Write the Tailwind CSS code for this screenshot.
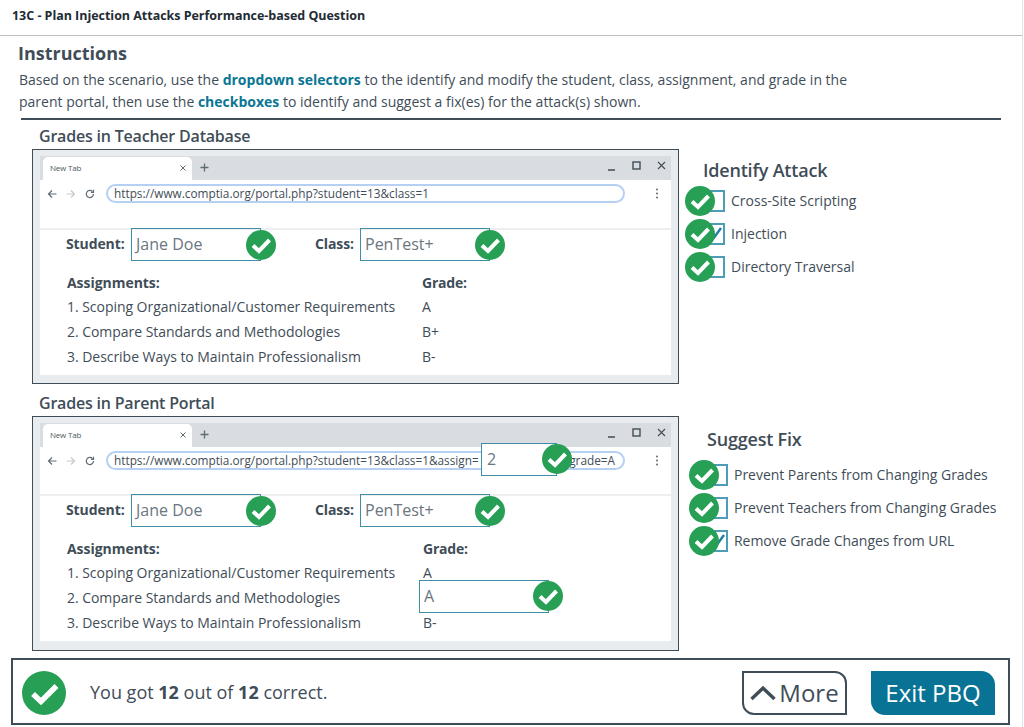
<!DOCTYPE html>
<html lang="en">
<head>
    <meta charset="UTF-8">
    <meta name="viewport" content="width=device-width, initial-scale=1.0">
    <title>13C - Plan Injection Attacks Performance-based Question</title>
    <script src="https://cdn.jsdelivr.net/npm/@tailwindcss/browser@4"></script>
</head>
<body class="bg-white font-['Open_Sans',sans-serif] text-[#3f4d58] h-[727px] overflow-hidden">
    <div class="h-[727px] w-[1023px] border-r border-[#e4e4e4]">
        <header class="h-[36px] border-b border-[#bdbdbd] pl-[12px] flex items-center text-[12.5px] font-bold tracking-[-0.03px] text-[#222b33] pb-[3px]">13C - Plan Injection Attacks Performance-based Question</header>

        <main class="pl-[18px]">
            <h2 class="mt-[5px] h-[24px] leading-[24px] text-[18px] font-bold">Instructions</h2>
            <p class="mt-[4px] ml-[1px] w-[860px] text-[14px] leading-[22px]">Based on the scenario, use the <b class="text-[#0a7694]">dropdown selectors</b> to the identify and modify the student, class, assignment, and grade in the parent portal, then use the <b class="text-[#0a7694]">checkboxes</b> to identify and suggest a fix(es) for the attack(s) shown.</p>
            <div class="mt-[5px] ml-[3px] w-[980px] h-[2px] bg-[#3f4d58]"></div>

            <!-- Teacher database -->
            <h3 class="mt-[6px] ml-[21px] h-[20px] leading-[20px] text-[16px] font-semibold tracking-[-0.2px]">Grades in Teacher Database</h3>
            <div class="mt-[3px] ml-[14px] flex">
                <div class="w-[647px] h-[235px] border border-[#3f4d58] bg-[#e8ecef] px-[7px] pt-[6px]">
                    <div class="h-[219px] bg-white">
                        <div class="h-[24px] bg-[#d9dce0] flex items-end relative">
                            <div class="ml-[3px] w-[149px] h-[23px] bg-white rounded-t-[5px] flex items-center justify-between pl-[7px] pr-[5px] pb-[2px]">
                                <span class="text-[8px] tracking-[-0.2px] text-[#4d5963]">New Tab</span>
                                <svg class="w-[8px] h-[8px]" viewBox="0 0 8 8" fill="none" stroke="#5f6b75" stroke-width="1"><path d="M1.500 1.500l5 5M6.500 1.500l-5 5"/></svg>
                            </div>
                            <svg class="ml-[8px] mb-[8px] w-[9px] h-[9px]" viewBox="0 0 9 9" fill="none" stroke="#5f6b75" stroke-width="1.3"><path d="M4.500 0.500v8M0.500 4.500h8"/></svg>
                            <div class="ml-auto mr-[4px] mb-[9px] flex items-center gap-[14px]">
                                <svg class="w-[11px] h-[11px]" viewBox="0 0 11 11" fill="none" stroke="#3f4d58" stroke-width="1.500"><path d="M2 10h7"/></svg>
                                <svg class="w-[11px] h-[11px]" viewBox="0 0 11 11" fill="none" stroke="#3f4d58" stroke-width="1.400"><rect x="2" y="2" width="7" height="7"/></svg>
                                <svg class="w-[11px] h-[11px]" viewBox="0 0 11 11" fill="none" stroke="#3f4d58" stroke-width="1.100"><path d="M2 2l7 7M9 2l-7 7"/></svg>
                            </div>
                        </div>
                        <div class="h-[50px] flex items-start pt-[4px] border-b-2 border-[#eeeeee]">
                            <div class="w-[66px] h-[19px] flex items-center pl-[7px] gap-[9px]">
                                <svg class="w-[10px] h-[10px] shrink-0" viewBox="0 0 10 10" fill="none" stroke="#5f6b75" stroke-width="1.200"><path d="M9.500 5h-8M5 1.500L1.500 5 5 8.500"/></svg>
                                <svg class="w-[10px] h-[10px] shrink-0" viewBox="0 0 10 10" fill="none" stroke="#c6cacd" stroke-width="1.200"><path d="M.5 5h8M5 1.500L8.500 5 5 8.500"/></svg>
                                <svg class="w-[10px] h-[10px] shrink-0" viewBox="0 0 10 10" fill="none" stroke="#5f6b75" stroke-width="1.200"><path d="M8.500 5A3.600 3.600 0 1 1 7.400 2.400M8.500 .8v2.500H6"/></svg>
                            </div>
                            <div class="w-[519px] h-[19px] border-2 border-[#b5d0f2] rounded-full pl-[6px] text-[11.8px] leading-[15px] whitespace-nowrap">https://www.comptia.org/portal.php?student=13&amp;class=1</div>
                            <svg class="ml-[27px] mt-[4px] w-[10px] h-[11px]" viewBox="0 0 10 11" fill="#5f6b75"><circle cx="5" cy="1.500" r="1"/><circle cx="5" cy="5.500" r="1"/><circle cx="5" cy="9.500" r="1"/></svg>
                        </div>
                        <div class="flex items-center pl-[26px] -mt-[2px]">
                            <span class="w-[65px] text-[14px] font-bold tracking-[-0.1px] pb-[2px]">Student:</span>
                            <div class="w-[130px] h-[33px] border border-[#3d8ea6] pl-[4px] text-[16px] leading-[31px] text-[#6b7680]">Jane Doe</div>
                            <svg class="relative -ml-[15px] w-[30px] h-[30px]" viewBox="0 0 30 30"><circle cx="15" cy="15" r="15" fill="#27a056"/><path d="M7 15.500L13 21 23.500 10" fill="none" stroke="#fff" stroke-width="4"/></svg>
                            <span class="ml-[39px] w-[45px] text-[14px] font-bold tracking-[-0.1px] pb-[2px]">Class:</span>
                            <div class="w-[130px] h-[33px] border border-[#3d8ea6] pl-[4px] text-[16px] leading-[31px] text-[#6b7680]">PenTest+</div>
                            <svg class="relative -ml-[15px] w-[30px] h-[30px]" viewBox="0 0 30 30"><circle cx="15" cy="15" r="15" fill="#27a056"/><path d="M7 15.500L13 21 23.500 10" fill="none" stroke="#fff" stroke-width="4"/></svg>
                        </div>
                        <div class="mt-[9px] ml-[27px] grid grid-cols-[355px_1fr] text-[14px] leading-[25px] tracking-[-0.04px]">
                            <span class="font-bold h-[24px]">Assignments:</span><span class="font-bold h-[24px] tracking-[-0.2px]">Grade:</span>
                            <span>1. Scoping Organizational/Customer Requirements</span><span>A</span>
                            <span>2. Compare Standards and Methodologies</span><span>B+</span>
                            <span>3. Describe Ways to Maintain Professionalism</span><span>B-</span>
                        </div>
                    </div>
                </div>
                <div class="ml-[6px]">
                    <h3 class="mt-[9px] pl-[18px] h-[24px] leading-[24px] text-[18px] font-semibold tracking-[-0.2px]">Identify Attack</h3>
                    <div class="mt-[2px] text-[14px]">
                        <div class="h-[33px] flex items-center">
                            <svg class="relative z-10 w-[30px] h-[30px]" viewBox="0 0 30 30"><circle cx="15" cy="15" r="15" fill="#27a056"/><path d="M7 15.500L13 21 23.500 10" fill="none" stroke="#fff" stroke-width="4"/></svg>
                            <div class="-ml-[12px] w-[22px] h-[22px] border-2 border-[#4f9cb8]"></div>
                            <span class="ml-[6px]">Cross-Site Scripting</span>
                        </div>
                        <div class="h-[33px] flex items-center">
                            <svg class="relative z-10 w-[30px] h-[30px]" viewBox="0 0 30 30"><circle cx="15" cy="15" r="15" fill="#27a056"/><path d="M7 15.500L13 21 23.500 10" fill="none" stroke="#fff" stroke-width="4"/></svg>
                            <div class="-ml-[12px] w-[22px] h-[22px] border-2 border-[#4f9cb8]"><svg class="w-[18px] h-[18px]" viewBox="0 0 18 18" fill="none" stroke="#1f7fa3" stroke-width="2.400"><path d="M8 14L16 3"/></svg></div>
                            <span class="ml-[6px]">Injection</span>
                        </div>
                        <div class="h-[33px] flex items-center">
                            <svg class="relative z-10 w-[30px] h-[30px]" viewBox="0 0 30 30"><circle cx="15" cy="15" r="15" fill="#27a056"/><path d="M7 15.500L13 21 23.500 10" fill="none" stroke="#fff" stroke-width="4"/></svg>
                            <div class="-ml-[12px] w-[22px] h-[22px] border-2 border-[#4f9cb8]"></div>
                            <span class="ml-[6px]">Directory Traversal</span>
                        </div>
                    </div>
                </div>
            </div>

            <!-- Parent portal -->
            <h3 class="mt-[9px] ml-[21px] h-[20px] leading-[20px] text-[16px] font-semibold tracking-[-0.2px]">Grades in Parent Portal</h3>
            <div class="mt-[3px] ml-[14px] flex">
                <div class="w-[647px] h-[235px] border border-[#3f4d58] bg-[#e8ecef] px-[7px] pt-[6px]">
                    <div class="h-[218px] bg-white">
                        <div class="h-[24px] bg-[#d9dce0] flex items-end relative">
                            <div class="ml-[3px] w-[149px] h-[23px] bg-white rounded-t-[5px] flex items-center justify-between pl-[7px] pr-[5px] pb-[2px]">
                                <span class="text-[8px] tracking-[-0.2px] text-[#4d5963]">New Tab</span>
                                <svg class="w-[8px] h-[8px]" viewBox="0 0 8 8" fill="none" stroke="#5f6b75" stroke-width="1"><path d="M1.500 1.500l5 5M6.500 1.500l-5 5"/></svg>
                            </div>
                            <svg class="ml-[8px] mb-[8px] w-[9px] h-[9px]" viewBox="0 0 9 9" fill="none" stroke="#5f6b75" stroke-width="1.3"><path d="M4.500 0.500v8M0.500 4.500h8"/></svg>
                            <div class="ml-auto mr-[4px] mb-[9px] flex items-center gap-[14px]">
                                <svg class="w-[11px] h-[11px]" viewBox="0 0 11 11" fill="none" stroke="#3f4d58" stroke-width="1.500"><path d="M2 10h7"/></svg>
                                <svg class="w-[11px] h-[11px]" viewBox="0 0 11 11" fill="none" stroke="#3f4d58" stroke-width="1.400"><rect x="2" y="2" width="7" height="7"/></svg>
                                <svg class="w-[11px] h-[11px]" viewBox="0 0 11 11" fill="none" stroke="#3f4d58" stroke-width="1.100"><path d="M2 2l7 7M9 2l-7 7"/></svg>
                            </div>
                        </div>
                        <div class="h-[49px] flex items-start pt-[4px] border-b-2 border-[#eeeeee]">
                            <div class="w-[66px] h-[19px] flex items-center pl-[7px] gap-[9px]">
                                <svg class="w-[10px] h-[10px] shrink-0" viewBox="0 0 10 10" fill="none" stroke="#5f6b75" stroke-width="1.200"><path d="M9.500 5h-8M5 1.500L1.500 5 5 8.500"/></svg>
                                <svg class="w-[10px] h-[10px] shrink-0" viewBox="0 0 10 10" fill="none" stroke="#c6cacd" stroke-width="1.200"><path d="M.5 5h8M5 1.500L8.500 5 5 8.500"/></svg>
                                <svg class="w-[10px] h-[10px] shrink-0" viewBox="0 0 10 10" fill="none" stroke="#5f6b75" stroke-width="1.200"><path d="M8.500 5A3.600 3.600 0 1 1 7.400 2.400M8.500 .8v2.500H6"/></svg>
                            </div>
                            <div class="relative w-[519px] h-[19px] border-2 border-[#b5d0f2] rounded-full pl-[6px] text-[11.8px] leading-[15px] whitespace-nowrap">
                                https://www.comptia.org/portal.php?student=13&amp;class=1&amp;assign=
                                <span class="absolute right-[8px] top-0">grade=A</span>
                                <div class="absolute left-[373px] -top-[10px] w-[76px] h-[33px] border border-[#3d8ea6] bg-white pl-[5px] text-[16px] leading-[31px] text-[#6b7680]">2</div>
                                <svg class="absolute left-[434px] -top-[9px] w-[30px] h-[30px]" viewBox="0 0 30 30"><circle cx="15" cy="15" r="15" fill="#27a056"/><path d="M7 15.500L13 21 23.500 10" fill="none" stroke="#fff" stroke-width="4"/></svg>
                            </div>
                            <svg class="ml-[27px] mt-[4px] w-[10px] h-[11px]" viewBox="0 0 10 11" fill="#5f6b75"><circle cx="5" cy="1.500" r="1"/><circle cx="5" cy="5.500" r="1"/><circle cx="5" cy="9.500" r="1"/></svg>
                        </div>
                        <div class="flex items-center pl-[26px] -mt-[2px]">
                            <span class="w-[65px] text-[14px] font-bold tracking-[-0.1px] pb-[2px]">Student:</span>
                            <div class="w-[130px] h-[33px] border border-[#3d8ea6] pl-[4px] text-[16px] leading-[31px] text-[#6b7680]">Jane Doe</div>
                            <svg class="relative -ml-[15px] w-[30px] h-[30px]" viewBox="0 0 30 30"><circle cx="15" cy="15" r="15" fill="#27a056"/><path d="M7 15.500L13 21 23.500 10" fill="none" stroke="#fff" stroke-width="4"/></svg>
                            <span class="ml-[39px] w-[45px] text-[14px] font-bold tracking-[-0.1px] pb-[2px]">Class:</span>
                            <div class="w-[130px] h-[33px] border border-[#3d8ea6] pl-[4px] text-[16px] leading-[31px] text-[#6b7680]">PenTest+</div>
                            <svg class="relative -ml-[15px] w-[30px] h-[30px]" viewBox="0 0 30 30"><circle cx="15" cy="15" r="15" fill="#27a056"/><path d="M7 15.500L13 21 23.500 10" fill="none" stroke="#fff" stroke-width="4"/></svg>
                        </div>
                        <div class="mt-[9px] ml-[27px] grid grid-cols-[356px_1fr] text-[14px] leading-[25px] tracking-[-0.04px]">
                            <span class="font-bold h-[24px]">Assignments:</span><span class="font-bold h-[24px] tracking-[-0.2px]">Grade:</span>
                            <span>1. Scoping Organizational/Customer Requirements</span><span>A</span>
                            <span>2. Compare Standards and Methodologies</span>
                            <span class="relative">
                                <span class="absolute -left-[4px] -top-[5px] w-[130px] h-[33px] border border-[#3d8ea6] bg-white pl-[4px] text-[16px] leading-[31px] text-[#6b7680]">A</span>
                                <svg class="absolute left-[110px] -top-[4px] w-[30px] h-[30px]" viewBox="0 0 30 30"><circle cx="15" cy="15" r="15" fill="#27a056"/><path d="M7 15.500L13 21 23.500 10" fill="none" stroke="#fff" stroke-width="4"/></svg>
                            </span>
                            <span>3. Describe Ways to Maintain Professionalism</span><span>B-</span>
                        </div>
                    </div>
                </div>
                <div class="ml-[10px]">
                    <h3 class="mt-[11px] pl-[18px] h-[24px] leading-[24px] text-[18px] font-semibold tracking-[-0.2px]">Suggest Fix</h3>
                    <div class="mt-[7px] text-[14px] tracking-[-0.03px]">
                        <div class="h-[33px] flex items-center">
                            <svg class="relative z-10 w-[30px] h-[30px]" viewBox="0 0 30 30"><circle cx="15" cy="15" r="15" fill="#27a056"/><path d="M7 15.500L13 21 23.500 10" fill="none" stroke="#fff" stroke-width="4"/></svg>
                            <div class="-ml-[13px] w-[22px] h-[22px] border-2 border-[#4f9cb8]"></div>
                            <span class="ml-[6px]">Prevent Parents from Changing Grades</span>
                        </div>
                        <div class="h-[33px] flex items-center">
                            <svg class="relative z-10 w-[30px] h-[30px]" viewBox="0 0 30 30"><circle cx="15" cy="15" r="15" fill="#27a056"/><path d="M7 15.500L13 21 23.500 10" fill="none" stroke="#fff" stroke-width="4"/></svg>
                            <div class="-ml-[13px] w-[22px] h-[22px] border-2 border-[#4f9cb8]"></div>
                            <span class="ml-[6px]">Prevent Teachers from Changing Grades</span>
                        </div>
                        <div class="h-[33px] flex items-center">
                            <svg class="relative z-10 w-[30px] h-[30px]" viewBox="0 0 30 30"><circle cx="15" cy="15" r="15" fill="#27a056"/><path d="M7 15.500L13 21 23.500 10" fill="none" stroke="#fff" stroke-width="4"/></svg>
                            <div class="-ml-[13px] w-[22px] h-[22px] border-2 border-[#4f9cb8]"><svg class="w-[18px] h-[18px]" viewBox="0 0 18 18" fill="none" stroke="#1f7fa3" stroke-width="2.400"><path d="M8 14L16 3"/></svg></div>
                            <span class="ml-[6px]">Remove Grade Changes from URL</span>
                        </div>
                    </div>
                </div>
            </div>
        </main>

        <!-- Result bar -->
        <footer class="mt-[7px] ml-[11px] w-[999px] h-[67px] border-2 border-[#3f4d58] flex items-center pl-[9px] pr-[13px] pt-[2px]">
            <svg class="w-[44px] h-[44px]" viewBox="0 0 44 44"><circle cx="22" cy="22" r="22" fill="#27a056"/><path d="M11 23l8 7.500L34.500 15" fill="none" stroke="#fff" stroke-width="5.500"/></svg>
            <span class="ml-[24px] text-[18px]">You got <b>12</b> out of <b>12</b> correct.</span>
            <button class="ml-auto w-[105px] h-[44px] border-2 border-[#3f4d58] rounded-tr-[12px] rounded-bl-[12px] flex items-center justify-center gap-[3px] text-[24px]">
                <svg class="w-[26px] h-[16px]" viewBox="0 0 26 16" fill="none" stroke="#3f4d58" stroke-width="3.400"><path d="M1.500 14L13 3l11.500 11"/></svg>
                More
            </button>
            <button class="ml-[24px] w-[124px] h-[44px] bg-[#087394] text-white rounded-tr-[14px] rounded-bl-[14px] text-[24px]">Exit PBQ</button>
        </footer>
    </div>
</body>
</html>
